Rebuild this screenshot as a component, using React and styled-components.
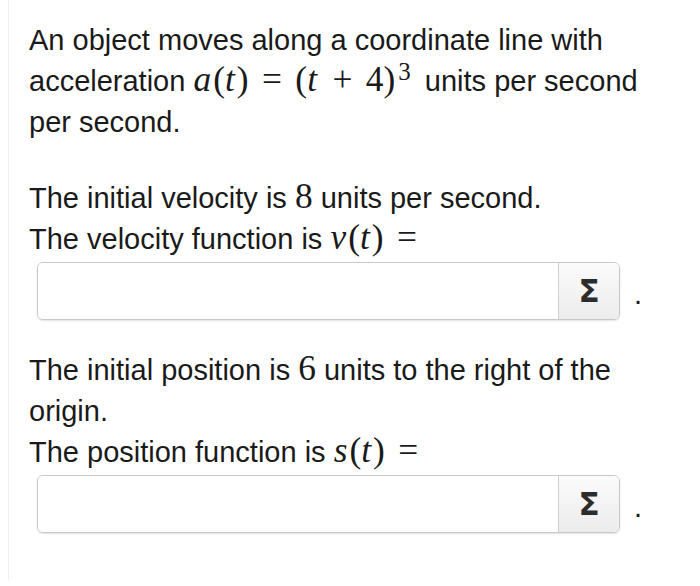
import styled, { createGlobalStyle } from "styled-components";

const GlobalStyle = createGlobalStyle`
	html, body {
		margin: 0;
		padding: 0;
		background: #ffffff;
	}
`;

export default function App() {
	return (
		<>
			<GlobalStyle />
			<Page>
				<Para>
					An object moves along a coordinate line with
					<br />
					acceleration <Var>a</Var>
					<Num>(</Num>
					<Var>t</Var>
					<Num>)</Num>
					<Op>=</Op>
					<Num>(</Num>
					<Var>t</Var>
					<Op>+</Op>
					<Num>4</Num>
					<Num>)</Num>
					<Sup>3</Sup> units per second
					<br />
					per second.
				</Para>

				<Para>
					The initial velocity is <Num>8</Num> units per second.
					<br />
					The velocity function is <Var>v</Var>
					<Num>(</Num>
					<Var>t</Var>
					<Num>)</Num>
					<Op>=</Op>
				</Para>
				<AnswerRow>
					<AnswerBox>
						<Field />
						<SigmaButton>Σ</SigmaButton>
					</AnswerBox>
					<Period>.</Period>
				</AnswerRow>

				<Para>
					The initial position is <Num>6</Num> units to the right of the
					<br />
					origin.
					<br />
					The position function is <Var>s</Var>
					<Num>(</Num>
					<Var>t</Var>
					<Num>)</Num>
					<Op>=</Op>
				</Para>
				<AnswerRow>
					<AnswerBox>
						<Field />
						<SigmaButton>Σ</SigmaButton>
					</AnswerBox>
					<Period>.</Period>
				</AnswerRow>
			</Page>
		</>
	);
}

const Page = styled.div`
	margin-left: 8px;
	height: 580px;
	padding: 20px 0 0 20px;
	box-sizing: border-box;
	border-left: 1px solid #f0f0f0;

	font-family: "Liberation Sans", Arial, sans-serif;
	font-size: 29px;
	color: #1a1a1a;
`;

const Para = styled.p`
	margin: 0 0 35px 0;
	line-height: 41px;
`;

const Var = styled.span`
	font-family: "Liberation Serif", "DejaVu Serif", serif;
	font-style: italic;
	font-size: 1.22em;
	line-height: 0;
	padding-right: 2px;
`;

const Num = styled.span`
	font-family: "Liberation Serif", "DejaVu Serif", serif;
	font-size: 1.22em;
	line-height: 0;
`;

const Op = styled(Num)`
	padding: 0 0.38em;
`;

const Sup = styled.sup`
	font-family: "Liberation Serif", "DejaVu Serif", serif;
	font-size: 25px;
	line-height: 0;
	vertical-align: 11px;
	margin: 0 6px 0 3px;
`;

const AnswerRow = styled.div`
	display: flex;
	align-items: center;
	gap: 14px;
	margin: -33px 0 30px 8px;
`;

const AnswerBox = styled.div`
	display: flex;
	width: 583px;
	height: 58px;
	box-sizing: border-box;
	border: 1.5px solid #c8c8c8;
	border-radius: 6px;
	box-shadow: 0 1px 2px rgba(0, 0, 0, 0.12);
	overflow: hidden;
`;

const Field = styled.div`
	flex: 1;
	background: #ffffff;
`;

const SigmaButton = styled.div`
	width: 60px;
	display: flex;
	align-items: center;
	justify-content: center;
	border-left: 1px solid #cfcfcf;
	background: linear-gradient(#fbfbfb, #ececec);

	font-family: "DejaVu Sans", sans-serif;
	font-weight: bold;
	font-size: 31px;
	color: #2c2c2c;
`;

const Period = styled.span`
	font-size: 29px;
	line-height: 1;
	padding-top: 6px;
`;
